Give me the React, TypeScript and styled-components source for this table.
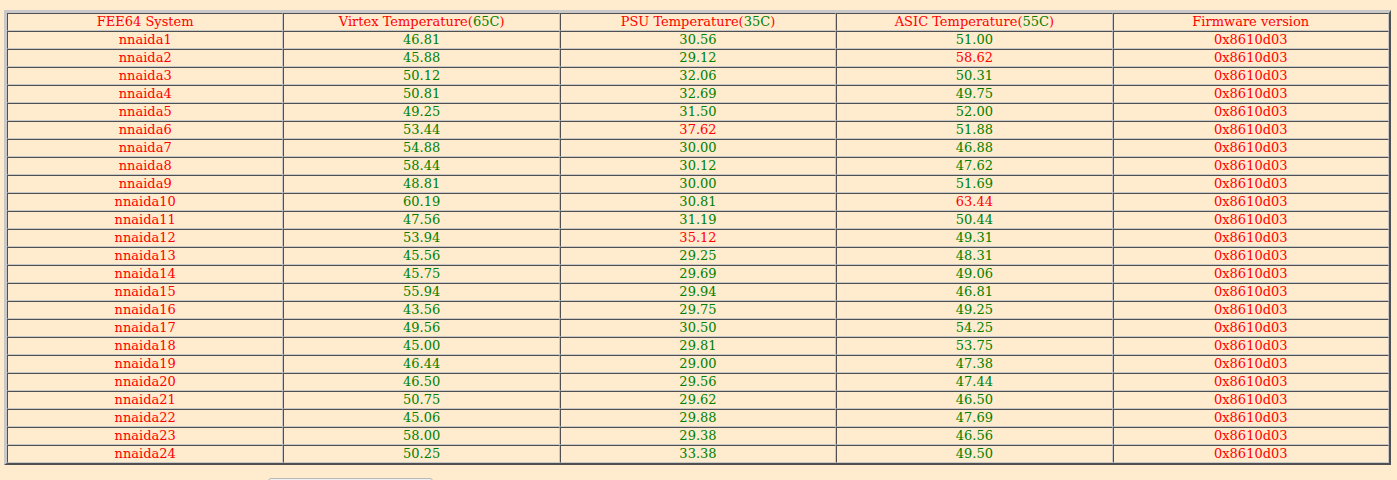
import React from 'react';
import styled, { createGlobalStyle } from 'styled-components';

const GlobalStyle = createGlobalStyle`
  html, body {
    margin: 0;
    padding: 0;
    background: #ffebcd;
    font-family: "DejaVu Serif", serif;
  }
`;

const Page = styled.div`
  padding: 10px 6px 0 4px;
`;

const Table = styled.table`
  width: 100%;
  table-layout: fixed;
  border-collapse: separate;
  border-spacing: 0;
  border-style: solid;
  border-width: 3px 2px 2px 3px;
  border-color: #c8c8c8 #505050 #505050 #c8c8c8;
  font-size: 13px;
`;

const Cell = styled.td<{ $ok?: boolean }>`
  padding: 0;
  height: 16px;
  line-height: 16px;
  text-align: center;
  white-space: nowrap;
  border-style: solid;
  border-width: 1px;
  border-color: #505050 #c8c8c8 #c8c8c8 #505050;
  color: ${(p) => (p.$ok ? '#008000' : '#ff0000')};
`;

const HeadCell = styled(Cell).attrs({ as: 'th' })`
  font-weight: normal;
`;

const Limit = styled.span`
  color: #008000;
`;

const Footer = styled.div`
  display: flex;
  padding: 13px 0 0 264px;
`;

const Button = styled.button`
  width: 165px;
  height: 22px;
  border: 1px solid #b8b8b8;
  border-radius: 3px;
  background: #f0f0f0;
`;

const rows: [number, number, number][] = [
  [46.81, 30.56, 51.0],
  [45.88, 29.12, 58.62],
  [50.12, 32.06, 50.31],
  [50.81, 32.69, 49.75],
  [49.25, 31.5, 52.0],
  [53.44, 37.62, 51.88],
  [54.88, 30.0, 46.88],
  [58.44, 30.12, 47.62],
  [48.81, 30.0, 51.69],
  [60.19, 30.81, 63.44],
  [47.56, 31.19, 50.44],
  [53.94, 35.12, 49.31],
  [45.56, 29.25, 48.31],
  [45.75, 29.69, 49.06],
  [55.94, 29.94, 46.81],
  [43.56, 29.75, 49.25],
  [49.56, 30.5, 54.25],
  [45.0, 29.81, 53.75],
  [46.44, 29.0, 47.38],
  [46.5, 29.56, 47.44],
  [50.75, 29.62, 46.5],
  [45.06, 29.88, 47.69],
  [58.0, 29.38, 46.56],
  [50.25, 33.38, 49.5],
];

const limits = [65, 35, 55];

const App: React.FC = () => {
  return (
    <Page>
      <GlobalStyle />
      <Table>
        <thead>
          <tr>
            <HeadCell>FEE64 System</HeadCell>
            <HeadCell>
              Virtex Temperature(<Limit>65C</Limit>)
            </HeadCell>
            <HeadCell>
              PSU Temperature(<Limit>35C</Limit>)
            </HeadCell>
            <HeadCell>
              ASIC Temperature(<Limit>55C</Limit>)
            </HeadCell>
            <HeadCell>Firmware version</HeadCell>
          </tr>
        </thead>
        <tbody>
          {rows.map((r, i) => (
            <tr key={i}>
              <Cell>nnaida{i + 1}</Cell>
              {r.map((v, j) => (
                <Cell key={j} $ok={v <= limits[j]}>
                  {v.toFixed(2)}
                </Cell>
              ))}
              <Cell>0x8610d03</Cell>
            </tr>
          ))}
        </tbody>
      </Table>
      <Footer>
        <Button />
      </Footer>
    </Page>
  );
};

export default App;
